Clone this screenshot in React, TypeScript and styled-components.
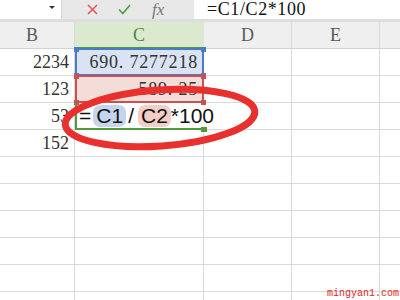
import React from "react";
import styled, { createGlobalStyle } from "styled-components";

const SERIF = `"Liberation Serif", "Noto Sans CJK SC", serif`;
const SANS = `"Liberation Sans", Arial, sans-serif`;
const MONO = `"Liberation Mono", "DejaVu Sans Mono", monospace`;

const GRID = "#d9d9d9";
const BLUE = "#4a7cc6";
const RED = "#c9514f";
const GREEN = "#4f9a3c";

const GlobalStyle = createGlobalStyle`
	html, body {
		margin: 0;
		padding: 0;
		background: #fff;
	}
	body {
		width: 400px;
		height: 300px;
		overflow: hidden;
	}
`;

const Screen = styled.div`
	position: relative;
	width: 400px;
	height: 300px;
	overflow: hidden;
	background: #fff;
`;

const FormulaBar = styled.div`
	display: flex;
	height: 19px;
	border-bottom: 3px solid #dedede;
`;

const NameBox = styled.div`
	box-sizing: border-box;
	width: 62px;
	background: #fff;
	border-right: 1px solid #d4d4d4;
	display: flex;
	justify-content: flex-end;
	align-items: flex-start;
	padding: 6px 6px 0 0;
`;

const Caret = styled.span`
	width: 0;
	height: 0;
	border-left: 3px solid transparent;
	border-right: 3px solid transparent;
	border-top: 3px solid #333;
`;

const ToolGroup = styled.div`
	box-sizing: border-box;
	width: 132px;
	background: #e8e8e8;
	display: flex;
	align-items: center;
	gap: 20px;
	padding-left: 25px;
`;

const FxLabel = styled.span`
	font-family: ${SERIF};
	font-style: italic;
	font-size: 17px;
	line-height: 19px;
	color: #777;
	margin-left: 1px;
`;

const FormulaInput = styled.div`
	flex: 1;
	background: #fff;
	padding-left: 13px;
	font-family: ${SERIF};
	font-size: 18px;
	line-height: 19px;
	color: #111;
	letter-spacing: 0.6px;
`;

const Sheet = styled.div`
	display: grid;
	grid-template-columns: 85px 129px 88px 88px 40px;
	grid-auto-rows: 27px;
	margin-left: -10px;
`;

const HeadCell = styled.div<{ $active?: boolean }>`
	box-sizing: border-box;
	background: ${(p) => (p.$active ? "#dbeacf" : "#efefef")};
	border-right: 1px solid ${(p) => (p.$active ? "#dbeacf" : "#d8d8d8")};
	border-bottom: ${(p) => (p.$active ? `2px solid ${GREEN}` : "1px solid #d2d2d2")};
	color: ${(p) => (p.$active ? "#4c8a3b" : "#595959")};
	font-family: ${SERIF};
	font-size: 18px;
	line-height: 26px;
	text-align: center;
`;

const Cell = styled.div<{ $fill?: string; $editing?: boolean; $spaced?: boolean }>`
	box-sizing: border-box;
	position: relative;
	background: ${(p) => p.$fill ?? "transparent"};
	border-right: 1px solid ${(p) => (p.$editing ? "transparent" : GRID)};
	border-bottom: 1px solid ${GRID};
	font-family: ${SERIF};
	font-size: 18px;
	line-height: 26px;
	letter-spacing: ${(p) => (p.$spaced ? "0.8px" : "0")};
	color: #333;
	text-align: right;
	padding-right: 5px;
	white-space: nowrap;
	overflow: visible;
`;

const RefFrame = styled.div<{ $color: string }>`
	position: absolute;
	top: -1px;
	left: 0;
	right: -1px;
	bottom: -1px;
	border: 2px solid ${(p) => p.$color};
	pointer-events: none;
	z-index: 2;
`;

const Corner = styled.span<{ $color: string; $v: "top" | "bottom"; $h: "left" | "right" }>`
	position: absolute;
	width: 5px;
	height: 5px;
	background: ${(p) => p.$color};
	${(p) => p.$v}: -3.5px;
	${(p) => p.$h}: -3.5px;
`;

const EditFrame = styled.div`
	position: absolute;
	top: -1px;
	left: 0;
	right: -1px;
	bottom: -1px;
	border-left: 2px solid ${GREEN};
	border-bottom: 2px solid ${GREEN};
	pointer-events: none;
	z-index: 2;
`;

const FillHandle = styled.span`
	position: absolute;
	right: -3px;
	bottom: -4px;
	width: 6px;
	height: 5px;
	background: ${GREEN};
`;

const EditLine = styled.div`
	display: flex;
	align-items: center;
	height: 100%;
	padding-left: 4px;
	font-family: ${SANS};
	font-size: 21px;
	color: #111;
	text-align: left;
	white-space: nowrap;
`;

const RefPill = styled.span<{ $bg: string }>`
	display: inline-block;
	margin-left: 2px;
	padding: 0 3px;
	border-radius: 7px;
	background: ${(p) => p.$bg};
	line-height: 22px;
`;

const Slash = styled.span`
	margin: 0 2px;
`;

const TextCursor = styled.span`
	display: inline-block;
	width: 1px;
	height: 23px;
	margin-left: 2px;
	background: #000;
`;

const Annotation = styled.svg`
	position: absolute;
	left: 0;
	top: 0;
	pointer-events: none;
	z-index: 5;
`;

const Watermark = styled.div`
	position: absolute;
	right: 1px;
	bottom: 1px;
	font-family: ${MONO};
	font-size: 10px;
	line-height: 11px;
	color: #e2231d;
	z-index: 6;
`;

type Row = {
	b?: string;
	c?: string;
	ref?: "blue" | "red";
	editing?: boolean;
};

const ROWS: Row[] = [
	{ b: "2234", c: "690. 7277218", ref: "blue" },
	{ b: "123", c: "589. 25", ref: "red" },
	{ b: "53", editing: true },
	{ b: "152" },
	{},
	{},
	{},
	{},
	{},
	{},
];

const REF_STYLE = {
	blue: { line: BLUE, fill: "#dae3f3" },
	red: { line: RED, fill: "#f4dcd8" },
};

const Frame = ({ color }: { color: string }) => (
	<RefFrame $color={color}>
		<Corner $color={color} $v="top" $h="left" />
		<Corner $color={color} $v="top" $h="right" />
		<Corner $color={color} $v="bottom" $h="left" />
		<Corner $color={color} $v="bottom" $h="right" />
	</RefFrame>
);

const CancelIcon = () => (
	<svg width="11" height="11" viewBox="0 0 11 11">
		<path d="M1 1 L10 10 M10 1 L1 10" stroke="#e25b5b" strokeWidth="1.6" fill="none" />
	</svg>
);

const EnterIcon = () => (
	<svg width="13" height="11" viewBox="0 0 13 11">
		<path d="M1 5.5 L4.8 9.5 L12 1" stroke="#4da14a" strokeWidth="1.7" fill="none" />
	</svg>
);

const App = (): JSX.Element => {
	return (
		<Screen>
			<GlobalStyle />
			<FormulaBar>
				<NameBox>
					<Caret />
				</NameBox>
				<ToolGroup>
					<CancelIcon />
					<EnterIcon />
					<FxLabel>fx</FxLabel>
				</ToolGroup>
				<FormulaInput>=C1/C2*100</FormulaInput>
			</FormulaBar>
			<Sheet>
				<HeadCell>B</HeadCell>
				<HeadCell $active>C</HeadCell>
				<HeadCell>D</HeadCell>
				<HeadCell>E</HeadCell>
				<HeadCell />
				{ROWS.map((row, i) => (
					<React.Fragment key={i}>
						<Cell>{row.b}</Cell>
						{row.editing ? (
							<Cell $editing>
								<EditLine>
									=<RefPill $bg="#c5d5ee">C1</RefPill>
									<Slash>/</Slash>
									<RefPill $bg="#f1cec6">C2</RefPill>
									*100
									<TextCursor />
								</EditLine>
								<EditFrame>
									<FillHandle />
								</EditFrame>
							</Cell>
						) : (
							<Cell $spaced $fill={row.ref ? REF_STYLE[row.ref].fill : undefined}>
								{row.c}
								{row.ref && <Frame color={REF_STYLE[row.ref].line} />}
							</Cell>
						)}
						<Cell />
						<Cell />
						<Cell />
					</React.Fragment>
				))}
			</Sheet>
			<Annotation width="400" height="300" viewBox="0 0 400 300">
				<ellipse
					cx="160"
					cy="118"
					rx="95"
					ry="28"
					transform="rotate(-4 160 118)"
					fill="none"
					stroke="#e8312e"
					strokeWidth="7"
				/>
			</Annotation>
			<Watermark>mingyan1.com</Watermark>
		</Screen>
	);
};

export default App;
